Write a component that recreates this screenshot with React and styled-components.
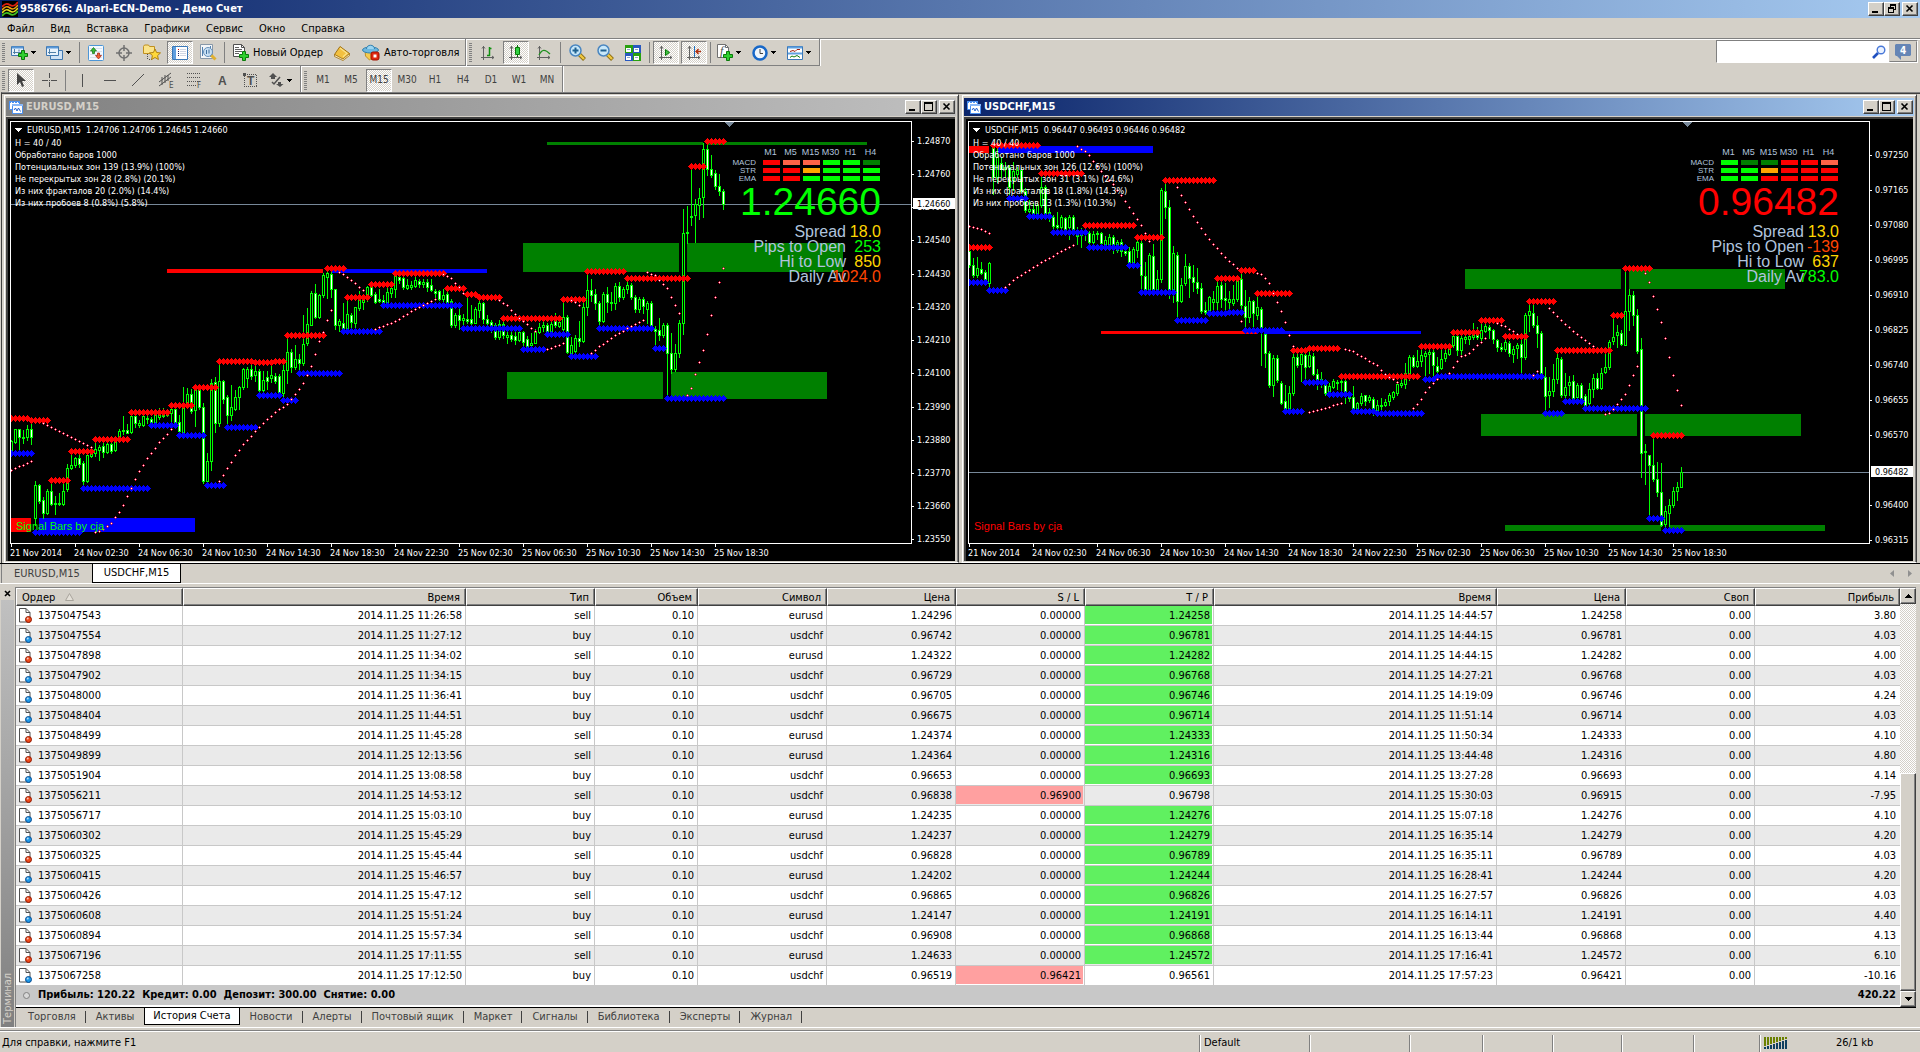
import React from "react";
import styled, { createGlobalStyle, css } from "styled-components";

const uiFont = '"DejaVu Sans Condensed", "DejaVu Sans", Tahoma, sans-serif';
const arial = '"Liberation Sans", Arial, sans-serif';

const GlobalStyle = createGlobalStyle`
  * {
    box-sizing: border-box;
  }
  body {
    margin: 0;
    background: #d4d0c8;
    color: #000;
    font-family: ${uiFont};
    font-size: 11px;
    line-height: 14px;
  }
  button, input {
    font: inherit;
    color: inherit;
  }
  svg {
    display: block;
    flex: none;
  }
`;

/* ---------- data ---------- */

// every bar is [high, open, close, low], in thirds of a pixel
const eurBars = [
  [1050, 1085, 1054, 1090], [1018, 1056, 1018, 1060], [1018, 1018, 1042, 1077], [1020, 1041, 1043, 1060],
  [1006, 1042, 1018, 1050], [1000, 1018, 1040, 1063], [1173, 1283, 1186, 1305], [1183, 1186, 1233, 1240],
  [1220, 1231, 1268, 1285], [1198, 1268, 1204, 1272], [1170, 1204, 1243, 1246], [1218, 1238, 1241, 1273],
  [1210, 1238, 1241, 1246], [1180, 1243, 1204, 1246], [1122, 1198, 1134, 1203], [1090, 1134, 1124, 1137],
  [1100, 1124, 1104, 1130], [1096, 1104, 1122, 1130], [1112, 1119, 1172, 1185], [1092, 1172, 1096, 1175],
  [1084, 1098, 1088, 1100], [1050, 1088, 1078, 1098], [1064, 1080, 1070, 1109], [1060, 1068, 1086, 1101],
  [1058, 1086, 1062, 1088], [1042, 1062, 1082, 1088], [1048, 1079, 1052, 1083], [1018, 1050, 1024, 1054],
  [978, 1024, 1020, 1032], [1002, 1020, 1028, 1030], [970, 1026, 978, 1028], [970, 978, 1000, 1012],
  [990, 1006, 1000, 1010], [972, 1005, 978, 1008], [975, 984, 988, 1000], [980, 986, 1000, 1003],
  [956, 1000, 976, 1003], [954, 982, 962, 988], [955, 978, 966, 982], [960, 974, 968, 978],
  [955, 970, 958, 1018], [952, 958, 1000, 1010], [975, 996, 1024, 1028], [892, 1028, 944, 1032],
  [895, 944, 912, 955], [898, 912, 964, 970], [888, 960, 898, 1009], [896, 898, 952, 958],
  [940, 950, 1172, 1178], [1088, 1172, 1114, 1177], [866, 1114, 880, 1140], [860, 876, 1000, 1025],
  [818, 1000, 872, 1008], [870, 874, 926, 940], [915, 922, 976, 1008], [886, 976, 952, 990],
  [900, 956, 920, 960], [888, 920, 892, 958], [834, 892, 838, 898], [832, 864, 838, 890],
  [818, 836, 858, 866], [820, 856, 842, 872], [836, 842, 900, 908], [842, 900, 870, 905],
  [844, 860, 872, 898], [818, 864, 856, 876], [850, 858, 872, 880], [852, 858, 906, 912],
  [812, 910, 840, 925], [740, 840, 786, 880], [778, 786, 832, 845], [764, 832, 806, 838],
  [792, 808, 820, 840], [674, 820, 762, 825], [655, 760, 702, 765], [602, 704, 610, 706],
  [582, 608, 680, 683], [612, 680, 616, 685], [548, 616, 556, 620], [540, 560, 550, 625],
  [545, 552, 598, 622], [596, 598, 704, 716], [686, 704, 692, 722], [640, 698, 716, 725],
  [626, 718, 672, 722], [668, 674, 696, 718], [650, 698, 652, 710], [602, 654, 630, 660],
  [620, 636, 624, 658], [588, 628, 592, 632], [586, 592, 614, 618], [605, 612, 636, 640],
  [596, 628, 632, 636], [616, 630, 640, 645], [590, 636, 606, 640], [586, 608, 594, 622],
  [552, 596, 556, 622], [554, 560, 570, 578], [558, 564, 592, 598], [566, 594, 586, 598],
  [574, 592, 584, 596], [562, 588, 570, 592], [566, 574, 582, 590], [568, 582, 576, 592],
  [566, 576, 590, 602], [568, 584, 600, 604], [598, 602, 610, 626], [600, 604, 626, 630],
  [598, 626, 616, 632], [602, 612, 650, 655], [628, 632, 706, 710], [668, 706, 676, 710],
  [655, 676, 690, 718], [672, 690, 684, 702], [618, 686, 692, 700], [645, 686, 698, 708],
  [650, 698, 658, 700], [630, 660, 640, 680], [636, 640, 686, 700], [676, 686, 698, 718],
  [690, 696, 706, 726], [700, 704, 740, 746], [690, 742, 702, 746], [692, 702, 736, 744],
  [716, 740, 734, 760], [715, 736, 746, 752], [720, 738, 750, 762], [718, 750, 726, 754],
  [722, 726, 756, 772], [738, 748, 768, 772], [728, 766, 758, 770], [718, 758, 726, 760],
  [700, 726, 710, 728], [696, 710, 704, 724], [700, 706, 722, 728], [696, 722, 702, 726],
  [668, 690, 704, 712], [680, 708, 696, 712], [630, 716, 682, 724], [676, 682, 786, 790],
  [740, 788, 764, 795], [735, 782, 744, 794], [692, 744, 754, 768], [640, 752, 650, 756],
  [540, 652, 600, 674], [566, 600, 614, 632], [598, 612, 640, 656], [634, 640, 694, 706],
  [606, 692, 612, 696], [592, 612, 636, 666], [606, 636, 640, 660], [580, 640, 588, 656],
  [575, 588, 622, 632], [590, 622, 596, 626], [576, 598, 584, 610], [580, 586, 620, 626],
  [614, 622, 656, 666], [622, 656, 628, 666], [620, 628, 648, 668], [634, 658, 640, 700],
  [634, 640, 708, 714], [708, 718, 722, 768], [684, 720, 734, 750], [698, 734, 704, 740],
  [700, 706, 788, 920], [728, 788, 838, 850], [762, 838, 790, 842], [690, 790, 698, 802],
  [356, 698, 430, 732], [348, 430, 426, 460], [235, 378, 380, 405], [326, 376, 342, 456],
  [294, 344, 324, 388], [160, 322, 176, 382], [160, 176, 236, 256], [195, 236, 254, 262],
  [240, 250, 288, 298], [252, 288, 304, 314], [298, 302, 342, 358],
];

const chfBars = [
  [480, 484, 524, 530], [505, 526, 556, 560], [502, 556, 534, 560], [515, 536, 548, 552],
  [540, 546, 574, 578], [515, 580, 518, 590], [165, 175, 262, 312], [175, 262, 200, 275],
  [200, 218, 238, 262], [215, 236, 230, 262], [224, 230, 290, 320], [215, 270, 244, 300],
  [232, 252, 240, 262], [234, 240, 302, 306], [295, 304, 360, 366], [330, 364, 356, 372],
  [340, 358, 368, 372], [340, 370, 346, 374], [258, 346, 290, 350], [286, 290, 372, 376],
  [355, 372, 365, 392], [376, 382, 408, 416], [366, 406, 410, 418], [374, 410, 382, 416],
  [380, 384, 416, 418], [374, 410, 382, 446], [376, 382, 418, 424], [412, 420, 438, 462],
  [414, 436, 424, 472], [410, 426, 432, 450], [424, 430, 456, 462], [424, 456, 432, 465],
  [424, 432, 428, 448], [426, 430, 460, 466], [438, 462, 450, 466], [432, 462, 440, 468],
  [434, 442, 466, 488], [450, 480, 455, 486], [446, 456, 484, 498], [472, 484, 488, 495],
  [470, 482, 520, 524], [470, 516, 478, 530], [448, 480, 456, 500], [452, 458, 556, 602],
  [515, 558, 598, 602], [490, 598, 496, 602], [462, 498, 598, 604], [540, 598, 568, 602],
  [294, 568, 300, 576], [278, 302, 352, 384], [330, 350, 600, 624], [468, 600, 490, 635],
  [486, 496, 632, 684], [564, 632, 586, 635], [492, 580, 528, 585], [518, 528, 564, 622],
  [525, 562, 576, 604], [534, 576, 594, 608], [580, 594, 664, 668], [636, 660, 666, 672],
  [618, 664, 622, 668], [604, 636, 628, 665], [570, 636, 588, 660], [572, 586, 628, 650],
  [580, 624, 630, 658], [602, 636, 628, 658], [584, 640, 628, 644], [564, 628, 568, 632],
  [545, 566, 646, 658], [600, 648, 682, 720], [620, 682, 634, 695], [630, 634, 670, 712],
  [612, 676, 652, 688], [652, 656, 716, 824], [725, 732, 788, 830], [784, 788, 884, 890],
  [796, 884, 804, 918], [796, 804, 870, 876], [874, 878, 938, 942], [884, 934, 960, 965],
  [888, 958, 910, 960], [784, 910, 800, 914], [784, 800, 824, 832], [786, 822, 792, 872],
  [790, 794, 832, 875], [776, 828, 796, 832], [790, 798, 852, 856], [838, 852, 872, 896],
  [845, 868, 882, 892], [872, 880, 910, 914], [880, 910, 888, 914], [866, 890, 874, 894],
  [870, 876, 880, 896], [860, 876, 872, 900], [870, 874, 918, 938], [905, 918, 924, 934],
  [888, 922, 960, 968], [935, 958, 940, 962], [908, 940, 918, 945], [914, 916, 934, 944],
  [916, 930, 920, 936], [920, 926, 962, 974], [930, 964, 944, 968], [925, 944, 948, 958],
  [926, 946, 936, 948], [910, 934, 914, 946], [902, 920, 906, 926], [875, 910, 882, 914],
  [860, 884, 878, 890], [818, 882, 850, 895], [796, 852, 802, 870], [796, 802, 828, 832],
  [780, 828, 812, 832], [765, 812, 796, 828], [784, 798, 790, 868], [770, 792, 786, 850],
  [778, 786, 826, 858], [800, 828, 844, 850], [770, 834, 806, 838], [778, 804, 790, 812],
  [766, 792, 772, 796], [734, 764, 738, 770], [730, 738, 780, 794], [736, 780, 744, 792],
  [732, 746, 740, 758], [728, 748, 738, 762], [700, 740, 730, 746], [712, 732, 740, 746],
  [695, 744, 720, 756], [702, 722, 708, 726], [704, 710, 720, 745], [716, 720, 746, 758],
  [746, 750, 772, 782], [760, 772, 778, 784], [740, 778, 756, 782], [752, 758, 790, 798],
  [768, 792, 776, 815], [760, 774, 766, 804], [742, 762, 802, 852], [670, 802, 674, 806],
  [640, 674, 664, 722], [640, 670, 706, 712], [678, 704, 728, 770], [722, 728, 852, 866],
  [832, 860, 918, 962], [862, 916, 902, 950], [822, 902, 868, 918], [785, 868, 804, 878],
  [802, 806, 914, 922], [850, 916, 890, 922], [858, 886, 876, 915], [855, 874, 924, 928],
  [878, 922, 886, 926], [880, 886, 924, 930], [912, 918, 946, 950], [880, 940, 898, 944],
  [852, 896, 864, 920], [850, 864, 894, 898], [835, 894, 848, 898], [785, 846, 832, 850],
  [750, 832, 756, 836], [680, 754, 740, 762], [705, 734, 726, 770], [720, 730, 762, 766],
  [540, 764, 664, 766], [597, 664, 616, 720], [602, 616, 676, 706], [656, 676, 784, 788],
  [744, 778, 1088, 1160], [1062, 1083, 1086, 1182], [1094, 1096, 1124, 1278], [1040, 1126, 1168, 1172],
  [1116, 1168, 1206, 1218], [1118, 1206, 1304, 1308], [1248, 1302, 1262, 1312], [1228, 1268, 1246, 1310],
  [1190, 1246, 1204, 1252], [1176, 1204, 1190, 1230], [1130, 1190, 1146, 1192],
];

// fractal levels: [first bar, last bar, y]
const eurHighs = [
  [0, 4, 983], [5, 9, 991], [10, 14, 1170], [15, 20, 1084], [21, 29, 1048], [30, 39, 967], [40, 45, 946],
  [46, 51, 892], [52, 60, 814], [61, 65, 817], [66, 68, 814], [69, 78, 736], [79, 83, 535], [84, 89, 622],
  [90, 95, 583], [96, 108, 550], [109, 113, 595], [114, 116, 613], [117, 122, 622], [123, 137, 685],
  [138, 143, 628], [144, 153, 544], [154, 169, 565], [170, 173, 229], [174, 178, 154],
];
const eurLows = [
  [0, 5, 1090], [6, 17, 1326], [18, 34, 1195], [35, 41, 1006], [42, 48, 1036], [49, 53, 1186], [54, 61, 1012],
  [62, 67, 916], [68, 71, 931], [72, 82, 850], [83, 92, 724], [93, 112, 646], [113, 127, 715], [128, 133, 778],
  [134, 139, 733], [140, 146, 799], [147, 160, 715], [161, 163, 775], [164, 178, 925],
];
const chfHighs = [
  [0, 5, 472], [6, 17, 166], [18, 28, 250], [29, 41, 406], [42, 48, 442], [49, 61, 271], [62, 67, 565],
  [68, 71, 541], [72, 80, 610], [81, 84, 781], [85, 92, 775], [93, 112, 859], [113, 120, 769], [121, 127, 727],
  [128, 133, 691], [134, 139, 739], [140, 146, 634], [147, 160, 781], [161, 163, 676], [164, 170, 535],
  [171, 178, 1036],
];
const chfLows = [
  [0, 4, 577], [5, 9, 601], [10, 14, 325], [15, 20, 379], [21, 29, 427], [30, 39, 472], [40, 42, 526],
  [43, 51, 607], [52, 59, 691], [60, 64, 670], [65, 68, 667], [69, 78, 721], [79, 83, 964], [84, 89, 877],
  [90, 95, 913], [96, 101, 964], [102, 113, 970], [114, 116, 868], [117, 143, 859], [144, 148, 970],
  [149, 153, 934], [154, 169, 955], [170, 173, 1285], [174, 178, 1321],
];

// parabolic runs: key points [bar, y], dots between them are interpolated
const eurSar = [
  [[0, 1141], [5, 1112]],
  [[8, 1000], [20, 1070]],
  [[21, 1327], [23, 1316], [25, 1300], [26, 1282], [27, 1266], [28, 1246], [29, 1219], [31, 1168], [32, 1144], [34, 1105], [37, 1057], [40, 1018]],
  [[52, 1174], [54, 1135], [56, 1096], [58, 1063], [61, 1024], [64, 988], [66, 966], [69, 942], [71, 913], [73, 880], [75, 829], [76, 793], [77, 754], [78, 725], [79, 691], [80, 661]],
  [[82, 545], [84, 560], [86, 580], [88, 600]],
  [[91, 717], [96, 694], [100, 664], [106, 628]],
  [[108, 553], [110, 565], [112, 590], [113, 608]],
  [[122, 630], [124, 646], [127, 684], [129, 703], [131, 724]],
  [[134, 778], [138, 760]],
  [[140, 630], [142, 644]],
  [[145, 790], [147, 769], [151, 736], [154, 715], [158, 691]],
  [[159, 547], [161, 556], [163, 583], [164, 595], [165, 622], [167, 670]],
  [[169, 916], [170, 895], [171, 853], [173, 781], [174, 733], [175, 676], [176, 622], [177, 577], [178, 535]],
];
const chfSar = [
  [[0, 409], [3, 418], [5, 430]],
  [[9, 590], [12, 562], [18, 517], [22, 490], [26, 466]],
  [[27, 169], [29, 184], [30, 196], [31, 213], [33, 244], [36, 283], [38, 316], [41, 370], [43, 406], [45, 454]],
  [[52, 290], [54, 337], [57, 397], [60, 448], [63, 488], [67, 535]],
  [[68, 694]],
  [[72, 550], [73, 553], [74, 565], [75, 580], [77, 637], [78, 664], [79, 697], [80, 736], [81, 767]],
  [[85, 967], [88, 956], [93, 940]],
  [[94, 778], [96, 784], [99, 805], [102, 826], [104, 851], [107, 877]],
  [[111, 955], [113, 928], [114, 907], [115, 892], [117, 866]],
  [[120, 850], [122, 814], [123, 799], [125, 790], [127, 766], [129, 744]],
  [[132, 700], [134, 709], [136, 724], [137, 732]],
  [[141, 856], [142, 844]],
  [[145, 655], [147, 679], [150, 712], [153, 742], [156, 769]],
  [[159, 973], [160, 970], [162, 943], [164, 913], [166, 856], [167, 829]],
  [[169, 550], [170, 577], [171, 619], [173, 697], [174, 745], [175, 802], [176, 856], [177, 901], [178, 946]],
];

const G = "#008000";
const R = "#ff0000";
const B = "#0000ff";
const L = "#00ff00";
const T = "#ff6347";
const O = "#ffa500";

const timeLabels = [
  "21 Nov 2014", "24 Nov 02:30", "24 Nov 06:30", "24 Nov 10:30", "24 Nov 14:30", "24 Nov 18:30",
  "24 Nov 22:30", "25 Nov 02:30", "25 Nov 06:30", "25 Nov 10:30", "25 Nov 14:30", "25 Nov 18:30",
];

const charts = [
  {
    name: "EURUSD,M15",
    active: false,
    ohlc: "1.24706 1.24706 1.24645 1.24660",
    comment: [
      "H = 40 / 40",
      "Обработано баров 1000",
      "Потенциальных зон 139 (13.9%) (100%)",
      "Не перекрытых зон 28 (2.8%) (20.1%)",
      "Из них фракталов 20 (2.0%) (14.4%)",
      "Из них пробоев 8 (0.8%) (5.8%)",
    ],
    zones: [
      [512, 121, 156, 29, G], [676, 121, 156, 29, G], [496, 250, 156, 27, G], [660, 250, 156, 27, G],
      [536, 20, 156, 3, G], [696, 20, 160, 3, G], [156, 147, 156, 4, R], [320, 147, 156, 4, B],
      [0, 396, 20, 14, R], [28, 396, 156, 14, B],
    ],
    bars: eurBars,
    highs: eurHighs,
    lows: eurLows,
    sar: eurSar,
    priceY: 82,
    price: "1.24660",
    color: L,
    signals: [
      ["MACD", R, T, T, L, L, G],
      ["STR", R, R, O, L, L, L],
      ["EMA", R, R, L, L, L, L],
    ],
    stats: [
      ["Spread", "18.0", "#ffd700"],
      ["Pips to Open", "253", L],
      ["Hi to Low", "850", "#ffd700"],
      ["Daily Av", "1024.0", "#ff4500"],
    ],
    scale: [
      ["1.24870", 19], ["1.24760", 52], ["1.24650", 85], ["1.24540", 118], ["1.24430", 152], ["1.24320", 185],
      ["1.24210", 218], ["1.24100", 251], ["1.23990", 285], ["1.23880", 318], ["1.23770", 351],
      ["1.23660", 384], ["1.23550", 417],
    ],
  },
  {
    name: "USDCHF,M15",
    active: true,
    ohlc: "0.96447 0.96493 0.96446 0.96482",
    comment: [
      "H = 40 / 40",
      "Обработано баров 1000",
      "Потенциальных зон 126 (12.6%) (100%)",
      "Не перекрытых зон 31 (3.1%) (24.6%)",
      "Из них фракталов 18 (1.8%) (14.3%)",
      "Из них пробоев 13 (1.3%) (10.3%)",
    ],
    zones: [
      [496, 147, 156, 20, G], [660, 147, 156, 20, G], [512, 292, 156, 22, G], [676, 292, 156, 22, G],
      [536, 403, 156, 6, G], [700, 403, 156, 6, G], [0, 24, 20, 7, R], [28, 24, 156, 7, B],
      [132, 209, 156, 3, R], [295, 209, 157, 3, B],
    ],
    bars: chfBars,
    highs: chfHighs,
    lows: chfLows,
    sar: chfSar,
    priceY: 350,
    price: "0.96482",
    color: R,
    signals: [
      ["MACD", L, G, G, R, R, T],
      ["STR", L, L, O, R, R, R],
      ["EMA", L, L, R, R, R, R],
    ],
    stats: [
      ["Spread", "13.0", "#ffd700"],
      ["Pips to Open", "-139", "#ff4500"],
      ["Hi to Low", "637", "#ffd700"],
      ["Daily Av", "783.0", L],
    ],
    scale: [
      ["0.97250", 33], ["0.97165", 68], ["0.97080", 103], ["0.96995", 138], ["0.96910", 173], ["0.96825", 208],
      ["0.96740", 243], ["0.96655", 278], ["0.96570", 313], ["0.96400", 383], ["0.96315", 418],
    ],
  },
];

const columns = [
  ["Ордер", 167], ["Время", 283], ["Тип", 129], ["Объем", 103], ["Символ", 129], ["Цена", 129],
  ["S / L", 129], ["T / P", 129], ["Время", 283], ["Цена", 129], ["Своп", 129], ["Прибыль"],
];

const day = "2014.11.25 ";

// order, opened, type, symbol, price, s/l, t/p, closed, close price, profit, which level was hit
const orders = [
  ["1375047543", "11:26:58", "sell", "eurusd", "1.24296", "0.00000", "1.24258", "14:44:57", "1.24258", "3.80", "tp"],
  ["1375047554", "11:27:12", "buy", "usdchf", "0.96742", "0.00000", "0.96781", "14:44:15", "0.96781", "4.03", "tp"],
  ["1375047898", "11:34:02", "sell", "eurusd", "1.24322", "0.00000", "1.24282", "14:44:15", "1.24282", "4.00", "tp"],
  ["1375047902", "11:34:15", "buy", "usdchf", "0.96729", "0.00000", "0.96768", "14:27:21", "0.96768", "4.03", "tp"],
  ["1375048000", "11:36:41", "buy", "usdchf", "0.96705", "0.00000", "0.96746", "14:19:09", "0.96746", "4.24", "tp"],
  ["1375048404", "11:44:51", "buy", "usdchf", "0.96675", "0.00000", "0.96714", "11:51:14", "0.96714", "4.03", "tp"],
  ["1375048499", "11:45:28", "sell", "eurusd", "1.24374", "0.00000", "1.24333", "11:50:34", "1.24333", "4.10", "tp"],
  ["1375049899", "12:13:56", "sell", "eurusd", "1.24364", "0.00000", "1.24316", "13:44:48", "1.24316", "4.80", "tp"],
  ["1375051904", "13:08:58", "buy", "usdchf", "0.96653", "0.00000", "0.96693", "13:27:28", "0.96693", "4.14", "tp"],
  ["1375056211", "14:53:12", "sell", "usdchf", "0.96838", "0.96900", "0.96798", "15:30:03", "0.96915", "-7.95", "sl"],
  ["1375056717", "15:03:10", "buy", "eurusd", "1.24235", "0.00000", "1.24276", "15:07:18", "1.24276", "4.10", "tp"],
  ["1375060302", "15:45:29", "buy", "eurusd", "1.24237", "0.00000", "1.24279", "16:35:14", "1.24279", "4.20", "tp"],
  ["1375060325", "15:45:44", "sell", "usdchf", "0.96828", "0.00000", "0.96789", "16:35:11", "0.96789", "4.03", "tp"],
  ["1375060415", "15:46:57", "buy", "eurusd", "1.24202", "0.00000", "1.24244", "16:28:41", "1.24244", "4.20", "tp"],
  ["1375060426", "15:47:12", "sell", "usdchf", "0.96865", "0.00000", "0.96826", "16:27:57", "0.96826", "4.03", "tp"],
  ["1375060608", "15:51:24", "buy", "eurusd", "1.24147", "0.00000", "1.24191", "16:14:11", "1.24191", "4.40", "tp"],
  ["1375060894", "15:57:34", "sell", "usdchf", "0.96908", "0.00000", "0.96868", "16:13:44", "0.96868", "4.13", "tp"],
  ["1375067196", "17:11:55", "sell", "eurusd", "1.24633", "0.00000", "1.24572", "17:16:41", "1.24572", "6.10", "tp"],
  ["1375067258", "17:12:50", "buy", "usdchf", "0.96519", "0.96421", "0.96561", "17:57:23", "0.96421", "-10.16", "sl"],
];

const menus = ["Файл", "Вид", "Вставка", "Графики", "Сервис", "Окно", "Справка"];
const frames = ["M1", "M5", "M15", "M30", "H1", "H4", "D1", "W1", "MN"];
const terminalTabs = [
  "Торговля", "Активы", "История Счета", "Новости", "Алерты", "Почтовый ящик", "Маркет", "Сигналы",
  "Библиотека", "Эксперты", "Журнал",
];

/* ---------- window chrome ---------- */

const hatch = css`
  background: repeating-conic-gradient(#fff 0 25%, #d4d0c8 0 50%) 0 0 / 2px 2px;
`;

const raised = css`
  background: #d4d0c8;
  border: 1px solid;
  border-color: #fff #404040 #404040 #fff;
`;

const Page = styled.div`
  display: flex;
  flex-direction: column;
  min-height: 100vh;
`;

const TitleBar = styled.header`
  display: flex;
  align-items: center;
  gap: 2px;
  height: 18px;
  padding: 0 2px;
  background: linear-gradient(90deg, #0a246a, #a6caf0);
  color: #fff;
`;

const Title = styled.h1`
  flex: 1;
  margin: 0;
  font-size: 11px;
  font-weight: bold;
`;

const WindowButtons = styled.div`
  display: flex;

  button:last-child {
    margin-left: 2px;
  }
`;

const WindowButton = styled.button`
  ${raised}
  display: flex;
  align-items: center;
  justify-content: center;
  width: 16px;
  height: 14px;
  padding: 0;
  box-shadow: inset -1px -1px 0 #808080;
`;

const MenuBar = styled.nav`
  display: flex;
  height: 20px;
`;

const MenuItem = styled.button`
  border: 0;
  background: none;
  padding: 1px 9px 0 7px;
`;

const ToolRow = styled.div`
  display: flex;
  align-items: flex-start;
  height: ${(p) => (p.$first ? "28px" : "26px")};
  border-top: ${(p) => (p.$first ? "1px solid #808080" : "0")};
  box-shadow: ${(p) => (p.$first ? "inset 0 1px 0 #fff" : "none")};
`;

const ToolGroup = styled.div`
  display: flex;
  align-items: center;
  height: 27px;
  padding: 1px 0 0 2px;
  border-right: 1px solid #808080;
  border-bottom: ${(p) => (p.$last ? "0" : "1px solid #808080")};
  box-shadow: 1px 0 0 #fff, inset 0 1px 0 #fff;

  & + & {
    margin-left: 1px;
  }
`;

const Grip = styled.span`
  width: 3px;
  height: 19px;
  margin-right: 3px;
  background: repeating-linear-gradient(#808080 0 1px, #d4d0c8 1px 2px);
`;

const Divider = styled.span`
  width: 1px;
  height: 21px;
  margin: 0 3px 0 1px;
  background: #808080;
`;

const ToolButton = styled.button`
  display: flex;
  align-items: center;
  justify-content: center;
  width: 26px;
  height: 23px;
  margin-right: 2px;
  padding: 0;
  border: 1px solid transparent;
  background: none;
  color: #404040;
  ${(p) =>
    p.$pressed &&
    css`
      ${hatch}
      border-color: #808080 #fff #fff #808080;
    `}
`;

const DropButton = styled(ToolButton)`
  justify-content: flex-start;
  gap: 3px;
  width: 33px;
  padding-left: 2px;
`;

const TextButton = styled(ToolButton)`
  gap: 4px;
  width: auto;
  padding: 0 3px 0 4px;
  color: #000;
`;

const FrameButton = styled(ToolButton)`
  font-size: 10px;
`;

const Search = styled.div`
  display: flex;
  align-items: center;
  height: 23px;
  margin: 1px 2px 0 auto;
  border: 1px solid;
  border-color: #808080 #fff #fff #808080;
  background: #fff;
`;

const SearchInput = styled.input`
  width: 155px;
  height: 20px;
  border: 0;
  outline: 0;
  background: none;
`;

const ChatButton = styled.button`
  ${raised}
  display: flex;
  align-items: center;
  justify-content: center;
  width: 28px;
  height: 21px;
  margin-left: 3px;
  padding: 0;
  border-color: #d4d0c8 #808080 #808080 #d4d0c8;
`;

/* ---------- chart windows ---------- */

const Workspace = styled.main`
  display: flex;
  gap: 2px;
  padding: 0 3px 0 1px;
  border-top: 1px solid #808080;
  box-shadow: inset 0 1px 0 #404040;
  margin-left: 1px;
  border-left: 1px solid #404040;
`;

const ChartWindow = styled.section`
  flex: 1 1 0;
  min-width: 0;
  margin-top: 1px;
  padding: 2px 2px 1px 1px;
  border: 1px solid;
  border-color: #d4d0c8 #404040 #fff #d4d0c8;
  box-shadow: inset 1px 1px 0 #fff, inset -1px 0 0 #808080;
`;

const ChartTitle = styled.div`
  display: flex;
  align-items: center;
  gap: 3px;
  height: 18px;
  margin: 1px 0 1px 1px;
  padding: 0 1px 0 3px;
  background: ${(p) =>
    p.$active ? "linear-gradient(90deg, #0a246a, #a6caf0)" : "linear-gradient(90deg, #808080, #c0c0c0)"};
  color: ${(p) => (p.$active ? "#fff" : "#d4d0c8")};
`;

const ChartName = styled.h2`
  flex: 1;
  margin: 0;
  font-size: 11px;
  font-weight: bold;
`;

const Client = styled.div`
  display: grid;
  grid-template-columns: minmax(0, 1fr) 43px;
  grid-template-rows: 423px 17px;
  margin: 0 1px 0 1px;
  padding: 2px 0 0 2px;
  border: solid #404040;
  border-width: 2px 0 0 2px;
  background: #000;
  color: #fff;
`;

const Plot = styled.div`
  position: relative;
  overflow: hidden;
  border: 1px solid #fff;
`;

const Comment = styled.div`
  position: absolute;
  top: 1px;
  left: 4px;
  font-size: 9px;
  line-height: 12px;
  white-space: pre;
`;

const Quote = styled.div`
  display: flex;
  align-items: center;
  gap: 5px;
  height: 14px;
`;

const Credit = styled.div`
  position: absolute;
  left: 5px;
  bottom: 10px;
  color: ${(p) => p.$color};
  font: 11px/14px ${arial};
`;

const Signals = styled.div`
  position: absolute;
  top: 24px;
  right: 30px;
  display: flex;
  flex-direction: column;
  align-items: flex-end;
  color: #b0c4de;
  font-family: ${arial};
`;

const SignalGrid = styled.div`
  display: grid;
  grid-template-columns: auto repeat(6, 17px);
  grid-auto-rows: 5px;
  gap: 3px;
  margin-right: 1px;
  font-size: 8px;
  line-height: 5px;
  text-align: right;
`;

const SignalHead = styled.div`
  display: grid;
  grid-template-columns: repeat(6, 17px);
  column-gap: 3px;
  height: 14px;
  margin-right: 2px;
  font-size: 9px;
  line-height: 12px;
  justify-items: center;
  white-space: nowrap;
`;

const SignalName = styled.span`
  padding-right: 4px;
`;

const SignalBar = styled.span`
  background: ${(p) => p.$color};
`;

const BigPrice = styled.div`
  margin: 1px 0 2px;
  color: ${(p) => p.$color};
  font-size: 39px;
  line-height: 40px;
`;

const Stat = styled.div`
  display: flex;
  font-size: 16px;
  line-height: 15px;
`;

const StatValue = styled.span`
  display: flex;
  justify-content: flex-end;
  width: 35px;
  color: ${(p) => p.$color};
`;

const Axis = styled.svg`
  font: 9px ${uiFont};
  fill: #fff;
`;

const toY = (v) => Math.round(v / 3) - 32;

function Zones({ items }) {
  return items.map(([x, y, w, h, fill], i) => <rect key={i} x={x} y={y} width={w} height={h} fill={fill} />);
}

function Candle({ index, bar }) {
  const [high, open, close, low] = bar.map(toY);
  const x = index * 4;
  const top = Math.min(open, close);
  const height = Math.max(1, Math.abs(close - open) + 1);
  return (
    <g>
      <rect x={x} y={high} width="1" height={low - high + 1} fill={L} />
      <rect x={x - 1} y={top} width="3" height={height} fill={L} />
      {height > 2 && (
        <rect x={x} y={top + 1} width="1" height={height - 2} fill={bar[2] > bar[1] ? "#fff" : "#000"} />
      )}
    </g>
  );
}

function Levels({ runs, color }) {
  const d = runs
    .map(([from, to, v]) => {
      const y = toY(v);
      let out = "";
      for (let k = from; k <= to; k++) {
        const x = k * 4;
        out += `M${x - 3} ${y}h7v1h-7zM${x - 2} ${y - 1}h5v3h-5zM${x - 1} ${y - 2}h3v5h-3zM${x} ${y - 3}h1v7h-1z`;
      }
      return out;
    })
    .join("");
  return <path d={d} fill={color} />;
}

function Sar({ runs }) {
  const dots = [];
  runs.forEach((run) => {
    run.forEach(([k, y], i) => {
      dots.push([k, y]);
      const next = run[i + 1];
      if (!next) return;
      for (let j = k + 1; j < next[0]; j++) {
        dots.push([j, y + ((next[1] - y) * (j - k)) / (next[0] - k)]);
      }
    });
  });
  return dots.map(([k, y], i) => (
    <g key={i}>
      <path d={`M${k * 4 - 1} ${toY(y)}h3v1h-3zM${k * 4} ${toY(y) - 1}h1v3h-1z`} fill="#dc143c" />
      <rect x={k * 4} y={toY(y)} width="1" height="1" fill="#fff" />
    </g>
  ));
}

function ChartPlot({ chart }) {
  return (
    <svg width="100%" height="421" shapeRendering="crispEdges">
      <Zones items={chart.zones} />
      <rect x="0" y={chart.priceY} width="100%" height="1" fill="#778899" />
      {chart.bars.map((bar, i) => (
        <Candle key={i} index={i} bar={bar} />
      ))}
      <Levels runs={chart.highs} color={R} />
      <Levels runs={chart.lows} color={B} />
      <Sar runs={chart.sar} />
      <path d="M714 0h9v1h-1v1h-1v1h-1v1h-1v1h-1v-1h-1v-1h-1v-1h-1v-1h-1z" fill="#778899" />
    </svg>
  );
}

function Chart({ chart }) {
  return (
    <ChartWindow>
      <ChartTitle $active={chart.active}>
        <ChartIcon />
        <ChartName>{chart.name}</ChartName>
        <Controls />
      </ChartTitle>
      <Client>
        <Plot>
          <ChartPlot chart={chart} />
          <Comment>
            <Quote>
              <svg width="7" height="4" fill="#fff" shapeRendering="crispEdges">
                <path d="M0 0h7v1h-1v1h-1v1h-1v1h-1v-1h-1v-1h-1v-1h-1z" />
              </svg>
              {chart.name + "  " + chart.ohlc}
            </Quote>
            {chart.comment.map((line) => (
              <div key={line}>{line}</div>
            ))}
          </Comment>
          <Signals>
            <SignalHead>
              {["M1", "M5", "M15", "M30", "H1", "H4"].map((f) => (
                <span key={f}>{f}</span>
              ))}
            </SignalHead>
            <SignalGrid>
              {chart.signals.map(([name, ...colors]) => (
                <React.Fragment key={name}>
                  <SignalName>{name}</SignalName>
                  {colors.map((c, i) => (
                    <SignalBar key={i} $color={c} />
                  ))}
                </React.Fragment>
              ))}
            </SignalGrid>
            <BigPrice $color={chart.color}>{chart.price}</BigPrice>
            {chart.stats.map(([label, value, color]) => (
              <Stat key={label}>
                <span>{label}</span>
                <StatValue $color={color}>{value}</StatValue>
              </Stat>
            ))}
          </Signals>
          <Credit $color={chart.color}>Signal Bars by cja</Credit>
        </Plot>
        <Axis width="43" height="423" shapeRendering="crispEdges">
          {chart.scale.map(([label, y]) => (
            <g key={label}>
              <rect x="0" y={y + 1} width="2" height="1" />
              <text x="5" y={y + 4}>
                {label}
              </text>
            </g>
          ))}
          <rect x="1" y={chart.priceY - 5} width="42" height="11" />
          <text x="5" y={chart.priceY + 4} fill="#000">
            {chart.price}
          </text>
        </Axis>
        <Axis width="100%" height="17" shapeRendering="crispEdges">
          {timeLabels.map((label, i) => (
            <g key={label}>
              <rect x={i * 64 + 1} y="0" width="1" height="3" />
              <text x={i * 64} y="12">
                {label}
              </text>
            </g>
          ))}
        </Axis>
      </Client>
    </ChartWindow>
  );
}

/* ---------- bottom part ---------- */

const ChartTabs = styled.div`
  display: flex;
  align-items: flex-start;
  height: 21px;
  padding-left: 1px;
  border-top: 1px solid #000;
  border-bottom: 1px solid #fff;
`;

const ChartTab = styled.button`
  height: 19px;
  padding: 0 12px;
  border: 0;
  border-left: 1px solid #808080;
  background: none;
  color: #404040;
  ${(p) =>
    p.$active &&
    css`
      padding: 0 11px;
      border: 1px solid #000;
      border-top: 0;
      background: #fff;
      color: #000;
    `}
`;

const TabArrows = styled.div`
  display: flex;
  gap: 14px;
  margin: 6px 8px 0 auto;
`;

const Terminal = styled.section`
  display: flex;
  padding: 3px 4px 0 0;
  border-bottom: 1px solid #fff;
`;

const Side = styled.div`
  display: flex;
  flex-direction: column;
  align-items: center;
  width: 15px;
`;

const CloseButton = styled.button`
  display: flex;
  align-items: center;
  justify-content: center;
  width: 12px;
  height: 13px;
  padding: 0;
  border: 0;
  background: none;
`;

const SideCaption = styled.div`
  flex: 1;
  width: 13px;
  padding-top: 3px;
  background: linear-gradient(#808080, #c0c0c0);
  color: #d4d0c8;
  font-size: 11px;
  line-height: 13px;
  writing-mode: vertical-rl;
  transform: rotate(180deg);
`;

const TerminalBody = styled.div`
  flex: 1;
  min-width: 0;
  border-left: 1px solid #808080;
`;

const TableArea = styled.div`
  display: flex;
  border-top: 1px solid #808080;
  border-bottom: 1px solid #000;
  background: #fff;
`;

const Table = styled.table`
  flex: 1;
  width: 100%;
  min-width: 0;
  margin-bottom: 2px;
  table-layout: fixed;
  border-collapse: separate;
  border-spacing: 0;
`;

const HeadCell = styled.th`
  height: 18px;
  padding: 1px 5px 0;
  border: 1px solid;
  border-color: #fff #404040 #404040 #fff;
  background: #d4d0c8;
  box-shadow: inset -1px -1px 0 #808080;
  font-weight: normal;
  text-align: ${(p) => (p.$left ? "left" : "right")};
  white-space: nowrap;

  svg {
    display: inline-block;
    margin-left: 10px;
  }
`;

const Row = styled.tr`
  background: ${(p) => (p.$even ? "#eaeaea" : "#fff")};

  &:last-child td {
    height: 19px;
    border-bottom: 0;
  }
`;

const Cell = styled.td`
  height: 20px;
  padding: 0 3px;
  border-right: 1px solid #c8c8c8;
  border-bottom: 1px solid #c8c8c8;
  text-align: right;
  white-space: nowrap;

  &:last-child {
    border-right: 0;
    padding-right: 4px;
  }
`;

const LevelCell = styled(Cell)`
  padding: 0 1px 0 0;
`;

const Level = styled.span`
  display: block;
  height: 18px;
  margin-bottom: 1px;
  padding-right: 2px;
  line-height: 20px;
  background: ${(p) => p.$fill || "none"};
`;

const OrderId = styled.span`
  display: flex;
  align-items: center;
  gap: 6px;
`;

const TotalCell = styled.td`
  height: 20px;
  padding: 0 4px 0 7px;
  background: #c8c8c8;
  font-weight: bold;
  text-align: ${(p) => (p.$right ? "right" : "left")};
  white-space: pre;
`;

const TotalText = styled.span`
  display: flex;
  align-items: center;
  gap: 8px;
`;

const ScrollBar = styled.div`
  ${hatch}
  display: flex;
  flex-direction: column;
  width: 16px;
`;

const ScrollButton = styled.button`
  ${raised}
  display: flex;
  align-items: center;
  justify-content: center;
  height: 16px;
  padding: 0;
  box-shadow: inset -1px -1px 0 #808080;
`;

const ScrollThumb = styled.div`
  ${raised}
  flex: 0 0 52%;
  margin-top: auto;
  box-shadow: inset -1px -1px 0 #808080;
`;

const TerminalTabs = styled.div`
  display: flex;
  align-items: flex-start;
  height: 19px;
  padding-left: 2px;
`;

const TerminalTab = styled.button`
  display: flex;
  align-items: center;
  height: 17px;
  padding: 0;
  border: 0;
  background: none;
  color: #404040;

  span {
    padding: 0 9px 0 10px;
    line-height: 12px;
    border-right: 1px solid ${(p) => (p.$bare ? "transparent" : "#404040")};
  }
  ${(p) =>
    p.$active &&
    css`
      border: 1px solid #000;
      border-top: 0;
      background: #fff;
      color: #000;
      span {
        padding: 0 8px;
        border: 0;
      }
    `}
`;

const StatusBar = styled.footer`
  display: flex;
  align-items: center;
  flex: 1;
  min-height: 22px;
  margin-top: 2px;
  padding-top: 3px;
  border-top: 1px solid #808080;
  box-shadow: inset 0 1px 0 #fff;
`;

const StatusCell = styled.div`
  display: flex;
  align-items: center;
  gap: 48px;
  width: ${(p) => p.$width}px;
  height: 17px;
  padding-left: 4px;
  border-left: 1px solid #808080;
  box-shadow: inset 1px 0 0 #fff;
  white-space: nowrap;
`;

const StatusHint = styled.div`
  flex: 1;
  padding-left: 2px;
`;

/* ---------- icons ---------- */

const Icon = ({ w = 16, h = 16, children, crisp }) => (
  <svg width={w} height={h} viewBox={`0 0 ${w} ${h}`} fill="none" shapeRendering={crisp ? "crispEdges" : undefined}>
    {children}
  </svg>
);

// single letters that belong to an icon
const Letter = styled.text`
  fill: #505050;
  font-family: ${(p) => p.$font || uiFont};
  font-size: ${(p) => p.$size}px;
  font-weight: ${(p) => (p.$bold ? "bold" : "normal")};
  font-style: ${(p) => (p.$italic ? "italic" : "normal")};
`;

const AppIcon = () => (
  <Icon>
    <rect width="16" height="16" fill="#000" />
    <path d="M0 6c3-4 5-4 8-2s5 1 8-3" stroke="#e02010" strokeWidth="2" />
    <path d="M0 9c3-4 5-4 8-2s5 1 8-3" stroke="#f0a010" strokeWidth="1.6" />
    <path d="M0 12c3-4 5-4 8-2s5 1 8-3" stroke="#e8e020" strokeWidth="1.6" />
    <path d="M0 15c3-4 5-4 8-2s5 1 8-3" stroke="#40c020" strokeWidth="2" />
  </Icon>
);

const ChartIcon = () => (
  <Icon w={14} h={14}>
    <path d="M.5 1.500h10v8h-10z" fill="#fff" stroke="#4a90f0" />
    <path d="M0 2h11" stroke="#4a90f0" strokeWidth="2" strokeDasharray="2 1" />
    <path d="M3.500 5.500h10v8h-10z" fill="#fff" stroke="#4a90f0" />
    <path d="M3 5h11" stroke="#8ab8f8" strokeWidth="2" />
    <path d="M5 10l1.500-2 1.500 3 1.500-3 2 3.500" stroke="#2060d0" />
  </Icon>
);

const Arrow = () => (
  <Icon w={5} h={3} crisp>
    <path d="M0 0h5v1h-1v1h-1v1h-1v-1h-1v-1h-1z" fill="#000" />
  </Icon>
);

const Plus = ({ x = 0, y = 0 }) => (
  <path
    transform={`translate(${x} ${y})`}
    d="M3.500.5h3v3h3v3h-3v3h-3v-3h-3v-3h3z"
    fill="#2fd02f"
    stroke="#0a7a0a"
  />
);

const Glass = ({ plus }) => (
  <Icon w={17} h={17}>
    <path d="M10 10l5.500 5.500" stroke="#8a6a10" strokeWidth="4" />
    <path d="M10 10l5 5" stroke="#f0c840" strokeWidth="2.400" />
    <circle cx="6.500" cy="6.500" r="5.500" fill="#c8e8fa" stroke="#4a86c0" strokeWidth="1.500" />
    <path d={plus ? "M3.500 6.500h6M6.500 3.500v6" : "M3.500 6.500h6"} stroke="#1f6090" strokeWidth="2" />
  </Icon>
);

const AxesMark = () => <path d="M3.500 1v14M1 12.500h13M2 3.500l1.500-2 1.500 2M12 11l2 1.500-2 1.500" stroke="#606060" />;

const NewChartIcon = () => (
  <Icon w={17}>
    <path d="M.5 1.500h12v9h-12z" fill="#e8f2fc" stroke="#4078b0" />
    <path d="M1 2.500h11" stroke="#5a98d8" strokeWidth="2" />
    <path d="M3.500 4v5M2 7.500h8M8 4.500v2" stroke="#5080a8" />
    <Plus x={7} y={5} />
  </Icon>
);

const ProfilesIcon = () => (
  <Icon w={17}>
    <path d="M4.500 5.500h12v9h-12z" fill="#cfe2f5" stroke="#4078b0" />
    <path d="M.5 1.500h12v9h-12z" fill="#e8f2fc" stroke="#4078b0" />
    <path d="M1 2.500h11" stroke="#5a98d8" strokeWidth="2" />
    <path d="M3.500 4v5M2 7.500h8" stroke="#5080a8" />
  </Icon>
);

const WatchIcon = () => (
  <Icon>
    <rect x=".5" y=".5" width="15" height="15" rx="1" fill="#f4f9ff" stroke="#4d96d6" />
    <path d="M2 3.500h12M2 6.500h12M2 9.500h12M2 12.500h12" stroke="#d8e2ec" />
    <path d="M5.500 2.500l3 3.500h-2v2.500h-2v-2.500h-2z" fill="#38b838" stroke="#107010" strokeWidth=".7" />
    <path d="M10.500 14l3-3.500h-2v-2.500h-2v2.500h-2z" fill="#f06030" stroke="#a02010" strokeWidth=".7" />
  </Icon>
);

const TargetIcon = () => (
  <Icon>
    <circle cx="8" cy="8" r="5" stroke="#707070" strokeWidth="1.500" />
    <path d="M8 0v6M8 10v6M0 8h6M10 8h6" stroke="#707070" strokeWidth="1.500" />
  </Icon>
);

const FolderIcon = () => (
  <Icon w={18} h={17}>
    <path d="M.5 2.500l1-1.500h4l1 1.500h5v7h-11z" fill="#fbe48a" stroke="#c09020" />
    <path d="M4.500 10v6M6 15.500h3" stroke="#505050" strokeDasharray="1 1" />
    <path d="M12 5l1.600 3.500 3.900.4-2.900 2.700.8 3.900-3.400-2-3.400 2 .8-3.900-2.900-2.700 3.900-.4z" fill="#ffd83a" stroke="#b08010" />
  </Icon>
);

const NavigatorIcon = () => (
  <Icon>
    <path d="M.5 1.500h15v13h-15z" fill="#fff" stroke="#3a78b8" />
    <path d="M2.500 2v12" stroke="#60a0e0" strokeWidth="3" />
    <path d="M6 4.500h1" stroke="#d00000" />
    <path d="M8 4.500h6M8 6.500h6M8 8.500h6M8 10.500h6" stroke="#d0d6e2" />
    <path d="M6 6.500h1M6 8.500h1M6 10.500h1" stroke="#202060" />
  </Icon>
);

const TesterIcon = () => (
  <Icon w={17} h={17}>
    <path d="M.5.5h12v14h-12z" fill="#f4f6f8" stroke="#8898a8" />
    <path d="M2.500 3v9M10.500 2v11" stroke="#5080b0" />
    <path d="M11 11l4.500 4.500" stroke="#e0b030" strokeWidth="3" />
    <circle cx="8" cy="8" r="4.500" fill="#c8e0f4" stroke="#6890b8" />
    <path d="M6.500 6v4M9 5.500v4" stroke="#4070a0" />
  </Icon>
);

const OrderIcon = () => (
  <Icon w={16} h={17}>
    <path d="M.5.5h8l3 3v9h-11z" fill="#fff" stroke="#505050" />
    <path d="M8.500.5v3h3" stroke="#505050" />
    <path d="M2 3.500h4M2 5.500h7M2 7.500h7M2 9.500h4" stroke="#606060" />
    <Plus x={6} y={7} />
  </Icon>
);

const IndicatorIcon = () => (
  <Icon w={16} h={17}>
    <path d="M.5.5h8l3 3v10h-11z" fill="#fff" stroke="#707070" />
    <path d="M8.500.5v3h3" stroke="#707070" />
    <Letter x="3" y="11" $size={12} $italic $font='"Liberation Serif", serif'>
      f
    </Letter>
    <Plus x={6} y={7} />
  </Icon>
);

const BookIcon = () => (
  <Icon w={18} h={16}>
    <path d="M7 1.500l9.500 7-6.500 6-8.500-5z" fill="#f2c040" stroke="#a07010" />
    <path d="M1.500 9.500l8.500 4.500 6.500-5.500v2l-6.500 5-8.500-4z" fill="#fff3c8" stroke="#a07010" strokeWidth=".8" />
    <path d="M7 3l7 5.200-4 3.600" stroke="#fbe28a" strokeWidth="1.200" />
  </Icon>
);

const RobotIcon = () => (
  <Icon w={18} h={17}>
    <path d="M3 6h11l-1.500 6-5 4-4-4z" fill="#f5cc50" stroke="#c09020" />
    <ellipse cx="8.500" cy="6" rx="8" ry="3" fill="#6db8e0" stroke="#3080b0" />
    <path d="M4.500 5c0-5 8-5 8 0" fill="#9ad4f0" stroke="#3080b0" />
    <rect x="9" y="8" width="8" height="8" rx="2" fill="#e02810" stroke="#a01000" />
    <rect x="11.500" y="10.500" width="3" height="3" fill="#fff" />
  </Icon>
);

const TileIcon = () => (
  <Icon crisp>
    <path d="M0 0h8v8h-8z M8 8h8v8h-8z" fill="#28a010" />
    <path d="M8 0h8v8h-8z M0 8h8v8h-8z" fill="#2858c0" />
    <path d="M1 3h5v4h-5zM9 3h5v4h-5zM1 11h5v4h-5zM9 11h5v4h-5z" fill="#fff" />
    <path d="M2 4h3v1h-3zM10 4h3v1h-3zM2 12h3v1h-3zM10 12h3v1h-3z" fill="#90a8c8" />
  </Icon>
);

const ClockIcon = () => (
  <Icon>
    <circle cx="8" cy="8" r="6.500" fill="#f0f6fc" stroke="#1868c8" strokeWidth="2.500" />
    <path d="M8 4v4.500h3" stroke="#404040" />
  </Icon>
);

const TemplateIcon = () => (
  <Icon>
    <path d="M.5 1.500h15v13h-15z" fill="#fff" stroke="#3a78b8" />
    <path d="M1 2.500h14M1 8.500h14" stroke="#60a0e0" strokeWidth="2" />
    <path d="M3 6.500l3-1 2 1 2-2h3" stroke="#a02010" />
    <path d="M3 12.500l2-1.500 2 1 3-1.500 3 2" stroke="#108010" />
  </Icon>
);

const Strokes = ({ d, crisp }) => (
  <Icon crisp={crisp}>
    <path d={d} stroke="#505050" />
  </Icon>
);

const DocIcon = ({ type }) => (
  <Icon w={13} h={15}>
    <path d="M.5.5h6.500l4 4v9.500h-10.500z" fill="#fff" stroke="#505050" />
    <path d="M7 .5v4h4" stroke="#505050" />
    <circle cx="9.500" cy="11.500" r="3" fill={type === "sell" ? "#f04818" : "#1c98e8"} stroke={type === "sell" ? "#901800" : "#0a4c90"} />
    <circle cx="8.700" cy="10.500" r="1" fill="#fff" fillOpacity=".7" />
  </Icon>
);

function Controls({ restore }) {
  return (
    <WindowButtons>
      <WindowButton aria-label="Minimize">
        <svg width="10" height="10" shapeRendering="crispEdges">
          <path d="M1 7h6v2h-6z" />
        </svg>
      </WindowButton>
      <WindowButton aria-label={restore ? "Restore" : "Maximize"}>
        <svg width="10" height="10" shapeRendering="crispEdges">
          {restore ? (
            <path fillRule="evenodd" d="M3 0h6v6h-2v3h-6v-6h2zM4 2v1h3v2h1v-3zM2 5v3h4v-3z" />
          ) : (
            <path fillRule="evenodd" d="M0 0h9v9h-9zM1 2v6h7v-6z" />
          )}
        </svg>
      </WindowButton>
      <WindowButton aria-label="Close">
        <svg width="10" height="10">
          <path d="M1.500 1.500l6 6M7.500 1.500l-6 6" stroke="#000" strokeWidth="1.600" />
        </svg>
      </WindowButton>
    </WindowButtons>
  );
}

/* ---------- toolbars ---------- */

function StandardTools() {
  return (
    <ToolRow $first>
      <ToolGroup>
        <Grip />
        <DropButton aria-label="New chart">
          <NewChartIcon />
          <Arrow />
        </DropButton>
        <DropButton aria-label="Profiles">
          <ProfilesIcon />
          <Arrow />
        </DropButton>
        <Divider />
        <ToolButton aria-label="Market watch">
          <WatchIcon />
        </ToolButton>
        <ToolButton aria-label="Data window">
          <TargetIcon />
        </ToolButton>
        <ToolButton aria-label="Navigator">
          <FolderIcon />
        </ToolButton>
        <ToolButton aria-label="Terminal" $pressed>
          <NavigatorIcon />
        </ToolButton>
        <ToolButton aria-label="Strategy tester">
          <TesterIcon />
        </ToolButton>
        <Divider />
        <TextButton>
          <OrderIcon />
          Новый Ордер
        </TextButton>
        <ToolButton aria-label="MetaEditor">
          <BookIcon />
        </ToolButton>
        <TextButton>
          <RobotIcon />
          Авто-торговля
        </TextButton>
      </ToolGroup>
      <ToolGroup>
        <Grip />
        <ToolButton aria-label="Bar chart">
          <Icon>
            <AxesMark />
            <path d="M9.500 2v9M9.500 3.500h2M7 10.500h3" stroke="#109010" strokeWidth="1.500" />
          </Icon>
        </ToolButton>
        <ToolButton aria-label="Candlesticks" $pressed>
          <Icon>
            <AxesMark />
            <path d="M9.500 0v12" stroke="#087808" />
            <path d="M7.500 2.500h4v7h-4z" fill="#30d040" stroke="#087808" />
          </Icon>
        </ToolButton>
        <ToolButton aria-label="Line chart">
          <Icon>
            <AxesMark />
            <path d="M3 10c3-6 6-6 11-1" stroke="#209020" strokeWidth="1.300" />
          </Icon>
        </ToolButton>
        <Divider />
        <ToolButton aria-label="Zoom in">
          <Glass plus />
        </ToolButton>
        <ToolButton aria-label="Zoom out">
          <Glass />
        </ToolButton>
        <ToolButton aria-label="Tile windows">
          <TileIcon />
        </ToolButton>
        <Divider />
        <ToolButton aria-label="Auto scroll" $pressed>
          <Icon>
            <AxesMark />
            <path d="M7.500 4.500v6l4-3z" fill="#40c040" stroke="#087808" />
          </Icon>
        </ToolButton>
        <ToolButton aria-label="Chart shift" $pressed>
          <Icon>
            <AxesMark />
            <path d="M8.500 1v11" stroke="#2070c0" />
            <path d="M10 6.500h5M12.500 4l-2.500 2.500 2.500 2.500" stroke="#b03010" strokeWidth="1.400" />
          </Icon>
        </ToolButton>
        <Divider />
        <DropButton aria-label="Indicators">
          <IndicatorIcon />
          <Arrow />
        </DropButton>
        <DropButton aria-label="Periods">
          <ClockIcon />
          <Arrow />
        </DropButton>
        <DropButton aria-label="Templates">
          <TemplateIcon />
          <Arrow />
        </DropButton>
      </ToolGroup>
      <Search>
        <SearchInput aria-label="Search" />
        <Icon w={14} h={14}>
          <path d="M1 13l5-5" stroke="#2050c0" strokeWidth="2.600" />
          <circle cx="9" cy="5" r="3.800" fill="#eaf2ff" stroke="#4878d8" strokeWidth="1.400" />
        </Icon>
        <ChatButton aria-label="4 messages">
          <svg width="16" height="16">
            <path d="M1 0h14l1 1v10l-1 1h-9v4l-4-4h-1l-1-1v-10z" fill="#6585b5" />
            <text x="5" y="10" fill="#fff" fontSize="10" fontWeight="bold">
              4
            </text>
          </svg>
        </ChatButton>
      </Search>
    </ToolRow>
  );
}

function DrawingTools() {
  return (
    <ToolRow>
      <ToolGroup $last>
        <Grip />
        <ToolButton aria-label="Cursor" $pressed>
          <Icon>
            <path d="M4 1v12l3-3 2 5 2-1-2-5h4z" fill="#404040" />
          </Icon>
        </ToolButton>
        <ToolButton aria-label="Crosshair">
          <Strokes crisp d="M8.500 1v5M8.500 10v5M1 8.500h6M10 8.500h6M8 8.500h1" />
        </ToolButton>
        <Divider />
        <ToolButton aria-label="Vertical line">
          <Strokes crisp d="M8.500 2v13" />
        </ToolButton>
        <ToolButton aria-label="Horizontal line">
          <Strokes crisp d="M2 8.500h12" />
        </ToolButton>
        <ToolButton aria-label="Trendline">
          <Strokes d="M2 14l12-12" />
        </ToolButton>
        <ToolButton aria-label="Equidistant channel">
          <Icon>
            <path d="M1 10l12-9M1 14l12-9M4 5v8M7 3v8M10 3v6" stroke="#505050" />
            <Letter x="11" y="16" $size={8}>
              E
            </Letter>
          </Icon>
        </ToolButton>
        <ToolButton aria-label="Fibonacci">
          <Icon>
            <path d="M1 1.500h14M1 5.500h14M1 9.500h14M1 13.500h9" stroke="#505050" strokeDasharray="1 1" />
            <Letter x="11" y="16" $size={8}>
              F
            </Letter>
          </Icon>
        </ToolButton>
        <ToolButton aria-label="Text">
          <Icon>
            <Letter x="4" y="13" $size={12} $bold $font={arial}>
              A
            </Letter>
          </Icon>
        </ToolButton>
        <ToolButton aria-label="Text label">
          <Icon>
            <path d="M2.500 2.500h12v12h-12z" stroke="#505050" strokeDasharray="1 1" shapeRendering="crispEdges" />
            <path d="M1 1h3v3h-3z" fill="#505050" />
            <Letter x="5" y="13" $size={12} $bold $font={arial}>
              T
            </Letter>
          </Icon>
        </ToolButton>
        <DropButton aria-label="Arrows">
          <Icon>
            <path d="M5 1l4 4h-2v2h-4v-2h-2zM12 15l-4-3h2v-2h3v2h2.500z" fill="#505050" />
            <path d="M4 10l2 2 6-7" stroke="#505050" strokeWidth="1.500" />
          </Icon>
          <Arrow />
        </DropButton>
      </ToolGroup>
      <ToolGroup $last>
        <Grip />
        {frames.map((f) => (
          <FrameButton key={f} $pressed={f === "M15"}>
            {f}
          </FrameButton>
        ))}
      </ToolGroup>
    </ToolRow>
  );
}

function History() {
  return (
    <TableArea>
      <Table>
        <colgroup>
          {columns.map(([, width], i) => (
            <col key={i} width={width} />
          ))}
        </colgroup>
        <thead>
          <tr>
            {columns.map(([label], i) => (
              <HeadCell key={i} $left={i === 0}>
                {label}
                {i === 0 && (
                  <svg width="9" height="8">
                    <path d="M.5 7.500l4-7 4 7z" fill="#e4e0d8" stroke="#a8a49c" />
                  </svg>
                )}
              </HeadCell>
            ))}
          </tr>
        </thead>
        <tbody>
          {orders.map(([id, opened, type, symbol, price, sl, tp, closed, closePrice, profit, hit], i) => (
            <Row key={id} $even={i % 2 === 1}>
              <Cell>
                <OrderId>
                  <DocIcon type={type} />
                  {id}
                </OrderId>
              </Cell>
              <Cell>{day + opened}</Cell>
              <Cell>{type}</Cell>
              <Cell>0.10</Cell>
              <Cell>{symbol}</Cell>
              <Cell>{price}</Cell>
              <LevelCell>
                <Level $fill={hit === "sl" && "#ffa0a0"}>{sl}</Level>
              </LevelCell>
              <LevelCell>
                <Level $fill={hit === "tp" && "#60f060"}>{tp}</Level>
              </LevelCell>
              <Cell>{day + closed}</Cell>
              <Cell>{closePrice}</Cell>
              <Cell>0.00</Cell>
              <Cell>{profit}</Cell>
            </Row>
          ))}
        </tbody>
        <tfoot>
          <tr>
            <TotalCell colSpan={11}>
              <TotalText>
                <svg width="7" height="7">
                  <circle cx="3.500" cy="3.500" r="3" fill="#d8d8d8" stroke="#808080" />
                </svg>
                {"Прибыль: 120.22  Кредит: 0.00  Депозит: 300.00  Снятие: 0.00"}
              </TotalText>
            </TotalCell>
            <TotalCell $right>420.22</TotalCell>
          </tr>
        </tfoot>
      </Table>
      <ScrollBar>
        <ScrollButton aria-label="Scroll up">
          <svg width="7" height="4" shapeRendering="crispEdges">
            <path d="M3 0h1v1h1v1h1v1h1v1h-7v-1h1v-1h1v-1h1z" />
          </svg>
        </ScrollButton>
        <ScrollThumb />
        <ScrollButton aria-label="Scroll down">
          <svg width="7" height="4" shapeRendering="crispEdges">
            <path d="M0 0h7v1h-1v1h-1v1h-1v1h-1v-1h-1v-1h-1v-1h-1z" />
          </svg>
        </ScrollButton>
      </ScrollBar>
    </TableArea>
  );
}

function App() {
  return (
    <Page>
      <GlobalStyle />
      <TitleBar>
        <AppIcon />
        <Title>9586766: Alpari-ECN-Demo - Демо Счет</Title>
        <Controls restore />
      </TitleBar>
      <MenuBar>
        {menus.map((m) => (
          <MenuItem key={m}>{m}</MenuItem>
        ))}
      </MenuBar>
      <StandardTools />
      <DrawingTools />
      <Workspace>
        {charts.map((chart) => (
          <Chart key={chart.name} chart={chart} />
        ))}
      </Workspace>
      <ChartTabs>
        {charts.map((chart) => (
          <ChartTab key={chart.name} $active={chart.active}>
            {chart.name}
          </ChartTab>
        ))}
        <TabArrows>
          <svg width="4" height="7" fill="#909090">
            <path d="M4 0v7l-4-3.500z" />
          </svg>
          <svg width="4" height="7" fill="#909090">
            <path d="M0 0v7l4-3.500z" />
          </svg>
        </TabArrows>
      </ChartTabs>
      <Terminal>
        <Side>
          <CloseButton aria-label="Close">
            <svg width="7" height="7">
              <path d="M1 1l5 5M6 1l-5 5" stroke="#000" strokeWidth="1.600" />
            </svg>
          </CloseButton>
          <SideCaption>Терминал</SideCaption>
        </Side>
        <TerminalBody>
          <History />
          <TerminalTabs>
            {terminalTabs.map((t, i) => (
              <TerminalTab key={t} $active={i === 2} $bare={i === 1}>
                <span>{t}</span>
              </TerminalTab>
            ))}
          </TerminalTabs>
        </TerminalBody>
      </Terminal>
      <StatusBar>
        <StatusHint>Для справки, нажмите F1</StatusHint>
        {[110, 100, 73, 70, 69, 72, 66].map((width, i) => (
          <StatusCell key={i} $width={width}>
            {i === 0 && "Default"}
          </StatusCell>
        ))}
        <StatusCell $width={161}>
          <svg width="24" height="12" shapeRendering="crispEdges">
            {[0, 1, 2, 3, 4, 5, 6, 7].map((n) => (
              <g key={n}>
                <rect x={n * 3} y="0" width="2" height={9 - n} fill="#6b8000" />
                <rect x={n * 3} y={10 - n} width="2" height={2 + n} fill="#104060" />
              </g>
            ))}
          </svg>
          26/1 kb
        </StatusCell>
      </StatusBar>
    </Page>
  );
}

export default App;
